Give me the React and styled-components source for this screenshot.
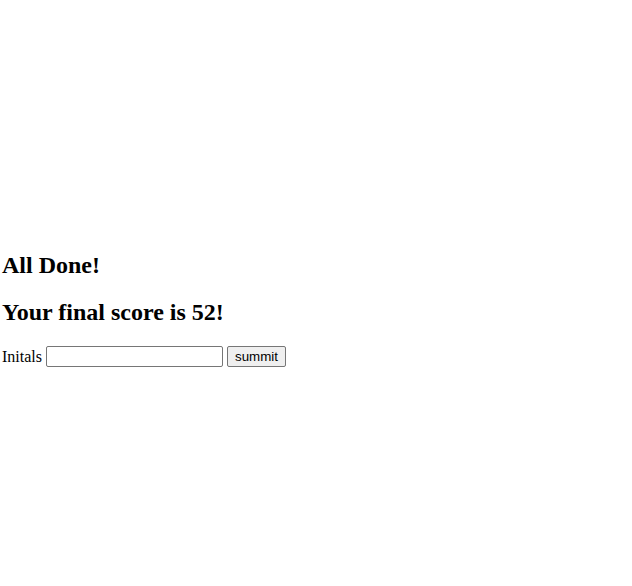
import React, { useState } from "react";
import styled, { createGlobalStyle } from "styled-components";

const GlobalStyle = createGlobalStyle`
  body {
    margin: 0;
    background: #ffffff;
    font-family: "Liberation Serif", "Times New Roman", serif;
    font-size: 16px;
    color: #000000;
  }
`;

const Page = styled.div`
  padding: 232px 2px 0 2px;
`;

const Heading = styled.h2`
  font-size: 24px;
  font-weight: bold;
  margin: 20px 0;
  line-height: 27px;
`;

const Form = styled.form`
  display: flex;
  align-items: center;
  gap: 4px;
  margin-top: 2px;
`;

const Label = styled.label`
  font-size: 16px;
`;

const TextInput = styled.input`
  width: 177px;
  height: 21px;
  box-sizing: border-box;
  border: 1px solid #767676;
  border-radius: 2px;
  padding: 1px 2px;
  font-family: "Liberation Sans", Arial, sans-serif;
  font-size: 13.33px;
`;

const SubmitButton = styled.button`
  height: 21px;
  box-sizing: border-box;
  padding: 1px 7px;
  border: 1px solid #767676;
  border-radius: 2px;
  background: #efefef;
  font-family: "Liberation Sans", Arial, sans-serif;
  font-size: 13.33px;
  color: #000000;
`;

const App = () => {
  const [initials, setInitials] = useState("");
  const score = 52;

  return (
    <>
      <GlobalStyle />
      <Page>
        <Heading>All Done!</Heading>
        <Heading>Your final score is {score}!</Heading>
        <Form onSubmit={(e) => e.preventDefault()}>
          <Label htmlFor="initials">Initals</Label>
          <TextInput
            id="initials"
            value={initials}
            onChange={(e) => setInitials(e.target.value)}
          />
          <SubmitButton type="submit">summit</SubmitButton>
        </Form>
      </Page>
    </>
  );
};

export default App;
